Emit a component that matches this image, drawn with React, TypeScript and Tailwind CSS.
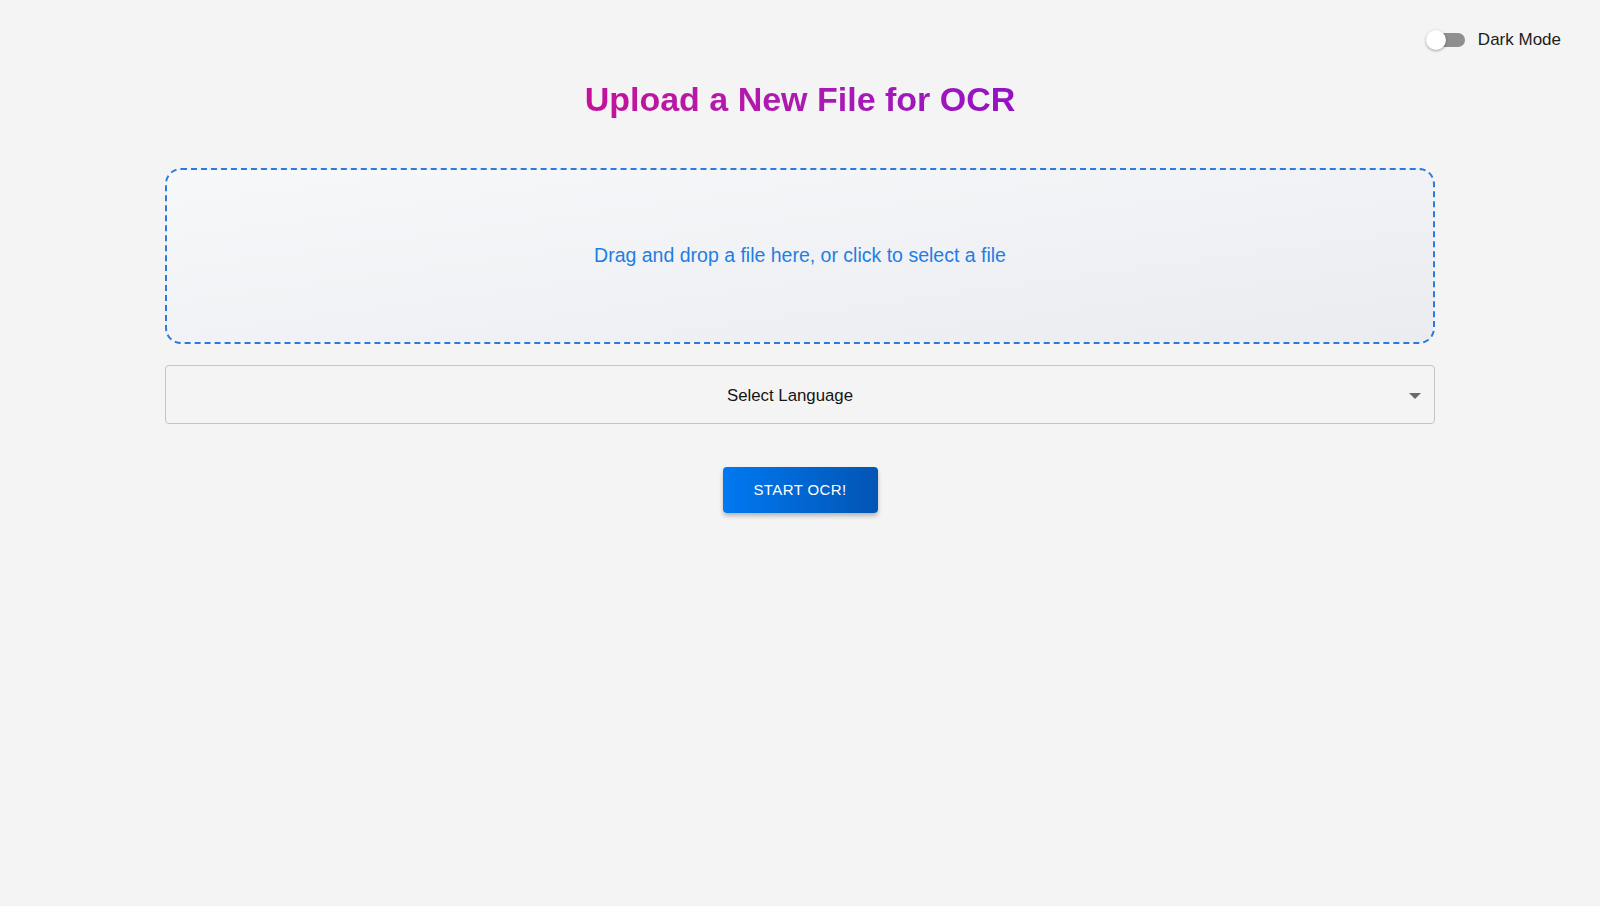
import { useState } from "react";

function DarkModeSwitch() {
  const [on, setOn] = useState(false);
  return (
    <label className="flex cursor-pointer items-center gap-[13px]">
      <button
        type="button"
        onClick={() => setOn(!on)}
        className="relative h-[14px] w-[38px] rounded-full bg-[#8f8f8f]"
      >
        <span
          className={`absolute top-[-3px] h-[20px] w-[20px] rounded-full bg-white shadow-[0_1px_3px_rgba(0,0,0,0.35)] ${on ? "left-[18px]" : "left-[-1px]"}`}
        />
      </button>
      <span className="text-[17px] text-[#1c1c1c]">Dark Mode</span>
    </label>
  );
}

export default function App() {
  const [lang, setLang] = useState("");
  return (
    <div className="min-h-[906px] bg-[#f4f4f4] font-['Liberation_Sans',Arial,sans-serif]">
      <div className="flex justify-end pt-[27px] pr-[39px]">
        <DarkModeSwitch />
      </div>

      <div className="mx-auto w-[1270px]">
        <h1 className="mt-[25px] text-center text-[34px] leading-[42px] font-bold">
          <span className="bg-gradient-to-r from-[#c4119a] to-[#950fc6] bg-clip-text text-transparent">
            Upload a New File for OCR
          </span>
        </h1>

        <div className="mt-[48px] flex h-[176px] cursor-pointer items-center justify-center rounded-[16px] border-2 border-dashed border-[#2a7ae0] bg-gradient-to-br from-[#f6f8fa] to-[#eaecf0]">
          <p className="text-[19.5px] text-[#1f7ee4]">
            Drag and drop a file here, or click to select a file
          </p>
        </div>

        <div className="relative mt-[21px]">
          <select
            value={lang}
            onChange={(e) => setLang(e.target.value)}
            className="block h-[59px] w-full appearance-none rounded-[4px] border border-[#c4c4c4] bg-transparent pt-[3px] pr-[34px] pl-[14px] text-center text-[16.8px] text-[#151515] outline-none"
          >
            <option value="">Select Language</option>
            <option value="eng">English</option>
            <option value="deu">German</option>
            <option value="fra">French</option>
          </select>
          <svg
            className="pointer-events-none absolute top-[28px] right-[14px]"
            width="12"
            height="6"
            viewBox="0 0 10 5"
          >
            <path d="M0 0 L5 5 L10 0 Z" fill="#6b6b6b" />
          </svg>
        </div>

        <div className="mt-[43px] flex justify-center">
          <button
            type="button"
            className="h-[46px] w-[155px] rounded-[4px] bg-gradient-to-r from-[#0079f2] to-[#0255b4] pt-[1px] text-[15px] tracking-[0.4px] text-white shadow-[0_3px_4px_rgba(0,0,0,0.25)]"
          >
            START OCR!
          </button>
        </div>
      </div>
    </div>
  );
}
